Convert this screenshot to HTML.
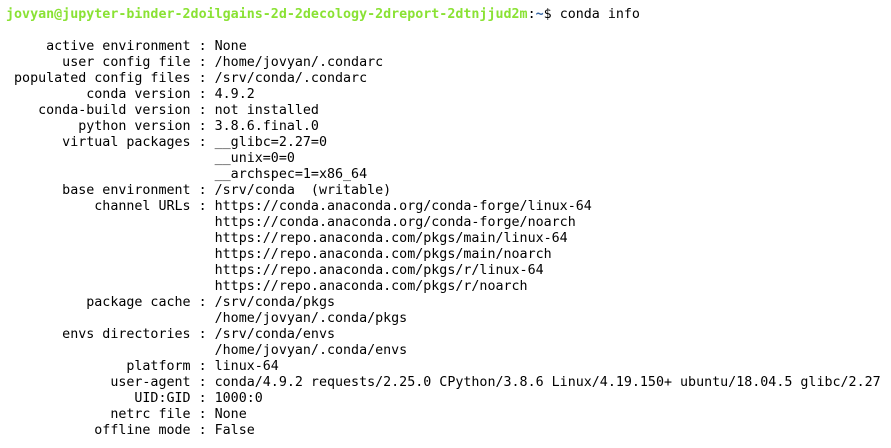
<!DOCTYPE html>
<html><head><style>
html,body{margin:0;padding:0;background:#fff;width:891px;height:448px;overflow:hidden}
pre{margin:0;padding:7px 0 0 6px;font-family:"DejaVu Sans Mono","Liberation Mono",monospace;font-size:13.34px;line-height:16px;color:#000;white-space:pre}
.g{color:#8ae234;font-weight:bold}.b{color:#3465a4;font-weight:bold}
</style></head><body><pre><span class="g">jovyan@jupyter-binder-2doilgains-2d-2decology-2dreport-2dtnjjud2m</span>:<span class="b">~</span>$ conda info

     active environment : None
       user config file : /home/jovyan/.condarc
 populated config files : /srv/conda/.condarc
          conda version : 4.9.2
    conda-build version : not installed
         python version : 3.8.6.final.0
       virtual packages : __glibc=2.27=0
                          __unix=0=0
                          __archspec=1=x86_64
       base environment : /srv/conda  (writable)
           channel URLs : https://conda.anaconda.org/conda-forge/linux-64
                          https://conda.anaconda.org/conda-forge/noarch
                          https://repo.anaconda.com/pkgs/main/linux-64
                          https://repo.anaconda.com/pkgs/main/noarch
                          https://repo.anaconda.com/pkgs/r/linux-64
                          https://repo.anaconda.com/pkgs/r/noarch
          package cache : /srv/conda/pkgs
                          /home/jovyan/.conda/pkgs
       envs directories : /srv/conda/envs
                          /home/jovyan/.conda/envs
               platform : linux-64
             user-agent : conda/4.9.2 requests/2.25.0 CPython/3.8.6 Linux/4.19.150+ ubuntu/18.04.5 glibc/2.27
                UID:GID : 1000:0
             netrc file : None
           offline mode : False</pre></body></html>
